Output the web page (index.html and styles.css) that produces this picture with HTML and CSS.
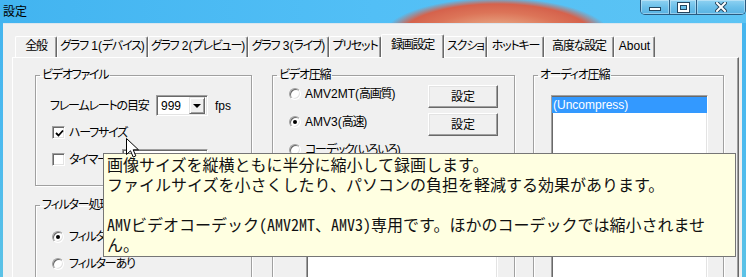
FILE: index.html
```html
<!DOCTYPE html>
<html lang="ja">
<head>
    <meta charset="UTF-8">
    <title>設定</title>
    <link rel="stylesheet" href="styles.css">
</head>
<body>
<div class="window">
    <div class="titlebar">
        <span class="title">設定</span>
        <div class="caption-buttons">
            <span class="cap-btn cap-min"><span class="glyph-min"></span></span>
            <span class="cap-btn cap-max"><span class="glyph-max"></span></span>
            <span class="cap-btn cap-close">
                <svg width="12" height="10" viewBox="0 0 12 10">
                    <path d="M2 1 L10 9 M10 1 L2 9" stroke="#24465f" stroke-width="4" stroke-linecap="square"/>
                    <path d="M2 1 L10 9 M10 1 L2 9" stroke="#fff" stroke-width="2" stroke-linecap="square"/>
                </svg>
            </span>
        </div>
    </div>

    <div class="client">
        <!-- tab strip -->
        <div class="tabs">
            <div class="tab tab-general">全般</div>
            <div class="tab tab-graph1">グラフ<span class="en">&nbsp;1(</span>デバイス<span class="en">)</span></div>
            <div class="tab tab-graph2">グラフ<span class="en">&nbsp;2(</span>プレビュー<span class="en">)</span></div>
            <div class="tab tab-graph3">グラフ<span class="en">&nbsp;3(</span>ライブ<span class="en">)</span></div>
            <div class="tab tab-preset">プリセット</div>
            <div class="tab tab-record selected">録画設定</div>
            <div class="tab tab-shot">スクショ</div>
            <div class="tab tab-hotkey">ホットキー</div>
            <div class="tab tab-advanced">高度な設定</div>
            <div class="tab tab-about"><span class="en">About</span></div>
        </div>

        <div class="tab-panel">
            <div class="column">
                <fieldset class="group group-file">
                    <legend>ビデオファイル</legend>
                    <div class="group-body">
                        <div class="row">
                            <span class="fps-label">フレームレートの目安</span>
                            <div class="combo">
                                <span class="combo-value en">999</span>
                                <span class="combo-btn"><span class="arrow"></span></span>
                            </div>
                            <span class="unit en">fps</span>
                        </div>
                        <div class="row check-row">
                            <span class="check">
                                <svg width="9" height="9" viewBox="0 0 9 9">
                                    <path d="M1 4 L3.5 6.5 L8 1.5" stroke="#000" stroke-width="1.8" fill="none"/>
                                </svg>
                            </span>
                            <span>ハーフサイズ</span>
                        </div>
                        <div class="row check-row">
                            <span class="check"></span>
                            <span class="timer-label">タイマー</span>
                            <div class="edit"></div>
                        </div>
                    </div>
                </fieldset>

                <fieldset class="group group-filter">
                    <legend>フィルター処理</legend>
                    <div class="group-body">
                        <div class="row radio-row"><span class="radio on"></span><span>フィルターなし</span></div>
                        <div class="row radio-row"><span class="radio"></span><span>フィルターあり</span></div>
                    </div>
                </fieldset>
            </div>

            <fieldset class="group group-video">
                <legend>ビデオ圧縮</legend>
                <div class="group-body">
                    <div class="codec-row">
                        <span class="radio-label"><span class="radio"></span><span><span class="en">AMV2MT(</span>高画質<span class="en">)</span></span></span>
                        <button class="btn">設定</button>
                    </div>
                    <div class="codec-row">
                        <span class="radio-label"><span class="radio on"></span><span><span class="en">AMV3(</span>高速<span class="en">)</span></span></span>
                        <button class="btn">設定</button>
                    </div>
                    <div class="codec-row">
                        <span class="radio-label"><span class="radio"></span><span>コーデック<span class="en">(</span>いろいろ<span class="en">)</span></span></span>
                    </div>
                    <div class="listbox codec-list"></div>
                </div>
            </fieldset>

            <fieldset class="group group-audio">
                <legend>オーディオ圧縮</legend>
                <div class="group-body">
                    <div class="listbox audio-list">
                        <div class="list-item selected en">(Uncompress)</div>
                    </div>
                </div>
            </fieldset>
        </div>
    </div>

    <!-- hover help -->
    <div class="tooltip">
        <div>画像サイズを縦横ともに半分に縮小して録画します。</div>
        <div>ファイルサイズを小さくしたり、パソコンの負担を軽減する効果があります。</div>
        <div>&nbsp;</div>
        <div><span class="hw">AMV</span>ビデオコーデック<span class="hw">(AMV2MT</span>、<span class="hw">AMV3)</span>専用です。ほかのコーデックでは縮小されませ</div>
        <div>ん。</div>
    </div>

    <svg class="cursor" width="14" height="21" viewBox="0 0 14 21">
        <path d="M0.5 0.5 L0.5 16.5 L4.5 12.8 L7.2 19 L9.8 17.9 L7.2 11.8 L12.5 11.8 Z" fill="#fff" stroke="#000" stroke-width="1" stroke-linejoin="round"/>
    </svg>
</div>
</body>
</html>
```

FILE: styles.css
```css
* {
    box-sizing: border-box;
}

body {
    margin: 0;
    width: 746px;
    height: 277px;
    overflow: hidden;
    font-family: "Liberation Sans", "Noto Sans CJK JP", sans-serif;
    font-size: 12px;
    line-height: 14px;
    letter-spacing: -1.2px;
    white-space: nowrap;
    color: #000;
    font-feature-settings: "palt";
}

/* latin runs keep their natural spacing */
.en {
    letter-spacing: 0;
}

.window {
    position: relative;
    height: 277px;
    display: flex;
    flex-direction: column;
    background: linear-gradient(180deg, #44b4ee 0%, #4cbaef 50%, #5bc2e6 100%);
}

/* title bar */
.titlebar {
    height: 23px;
    flex: none;
    display: flex;
    align-items: flex-start;
    padding: 0 0 0 3px;
    background:
        radial-gradient(ellipse 114px 38px at 497px 36px, #ecb692 0%, #e6a07e 30%, #dc7458 62%, #d5624c 84%, rgba(110, 196, 244, 0) 100%),
        linear-gradient(90deg, #42b4f0 0%, #52bff6 50%, #5cc4f4 100%);
}

.title {
    margin-top: 4px;
    font-size: 12px;
    line-height: 14px;
    letter-spacing: 0;
    font-family: "Noto Sans CJK JP", sans-serif;
}

.caption-buttons {
    margin-left: auto;
    display: flex;
    height: 15px;
    border: 1px solid #2a5a80;
    border-top: none;
    border-radius: 0 0 5px 5px;
    overflow: hidden;
}

.cap-btn {
    display: flex;
    align-items: center;
    justify-content: center;
    height: 14px;
    background: linear-gradient(180deg, #8fd2f2 0%, #6cc0ea 50%, #58b2e2 100%);
    box-shadow: inset 0 0 0 1px rgba(255, 255, 255, 0.35);
}

.cap-min {
    width: 29px;
    border-right: 1px solid #2a5a80;
}

.cap-max {
    width: 27px;
    border-right: 1px solid #2a5a80;
}

.cap-close {
    width: 48px;
}

.glyph-min {
    width: 12px;
    height: 4px;
    margin-top: 3px;
    background: #fff;
    border: 1px solid #24465f;
}

.glyph-max {
    width: 11px;
    height: 9px;
    border: 2px solid #fff;
    outline: 1px solid #24465f;
    box-shadow: inset 0 0 0 1px #24465f;
}

/* client area */
.client {
    flex: 1;
    margin: 0 4px 0 3px;
    background: #f0f0f0;
    border-top: 1px solid #dbe6ee;
    overflow: hidden;
}

.tabs {
    display: flex;
    align-items: flex-end;
    height: 23px;
    margin: 10px 0 0 12px;
}

.tab {
    height: 21px;
    flex: none;
    text-align: center;
    line-height: 19px;
    background: #f0f0f0;
    border-top: 1px solid #fff;
    border-left: 1px solid #fff;
    border-right: 1px solid #696969;
    box-shadow: inset -1px 0 0 #a0a0a0;
    border-radius: 2px 2px 0 0;
}

.tab.selected {
    height: 24px;
    margin-bottom: -1px;
    line-height: 20px;
    position: relative;
    z-index: 1;
}

.tab-general { width: 42px; }
.tab-graph1 { width: 91px; }
.tab-graph2 { width: 100px; }
.tab-graph3 { width: 81px; }
.tab-preset { width: 52px; }
.tab-record { width: 63px; }
.tab-shot { width: 43px; }
.tab-hotkey { width: 57px; }
.tab-advanced { width: 70px; }
.tab-about { width: 41px; }

.tab-panel {
    display: flex;
    align-items: flex-start;
    width: 727px;
    height: 240px;
    margin-left: 9px;
    padding: 10px 0 0 22px;
    border-top: 1px solid #fff;
    border-left: 1px solid #fff;
    border-right: 1px solid #696969;
    box-shadow: inset -1px 0 0 #a0a0a0;
}

/* group boxes */
.group {
    margin: 0;
    padding: 0;
    min-width: 0;
    border: 1px solid #a0a0a0;
    box-shadow: inset 1px 1px 0 #fff, 1px 1px 0 #fff;
}

.group legend {
    margin-left: 4px;
    padding: 0 2px;
    line-height: 14px;
}

.column {
    display: flex;
    flex-direction: column;
    gap: 12px;
    width: 217px;
}

.group-file {
    height: 118px;
}

.group-filter {
    height: 120px;
}

.group-video {
    width: 243px;
    height: 230px;
    margin-left: 20px;
}

.group-audio {
    width: 191px;
    height: 230px;
    margin-left: 18px;
}

.group-file .group-body {
    display: flex;
    flex-direction: column;
    gap: 6px;
    padding: 13px 0 0 14px;
}

.group-filter .group-body {
    display: flex;
    flex-direction: column;
    gap: 6px;
    padding: 14px 0 0 16px;
}

.group-video .group-body {
    display: flex;
    flex-direction: column;
    gap: 5px;
    padding: 3px 16px 0 16px;
}

.group-audio .group-body {
    padding: 13px 0 0 17px;
}

.row {
    display: flex;
    align-items: center;
    height: 21px;
}

.fps-label {
    width: 106px;
}

.unit {
    margin-left: 7px;
}

.check-row {
    gap: 4px;
    margin-left: 2px;
}

.radio-row {
    gap: 5px;
}

.timer-label {
    width: 49px;
}

/* classic 3D controls */
.check {
    width: 13px;
    height: 13px;
    display: flex;
    align-items: center;
    justify-content: center;
    background: #fff;
    border: 1px solid;
    border-color: #a0a0a0 #fff #fff #a0a0a0;
    box-shadow: inset 1px 1px 0 #696969, inset -1px -1px 0 #e3e3e3;
}

.check svg {
    margin: 1px 0 0 1px;
}

.radio {
    position: relative;
    width: 12px;
    height: 12px;
    flex: none;
    border-radius: 50%;
    background: #fff;
    border: 1px solid;
    border-color: #a0a0a0 #fff #fff #a0a0a0;
    box-shadow: inset 1px 1px 0 #696969, inset -1px -1px 0 #e3e3e3;
}

.radio.on::after {
    content: "";
    position: absolute;
    left: 3px;
    top: 3px;
    width: 4px;
    height: 4px;
    border-radius: 50%;
    background: #000;
}

.combo {
    width: 52px;
    height: 21px;
    display: flex;
    align-items: center;
    padding: 2px;
    background: #fff;
    border: 1px solid;
    border-color: #a0a0a0 #fff #fff #a0a0a0;
    box-shadow: inset 1px 1px 0 #696969, inset -1px -1px 0 #e3e3e3;
}

.combo-value {
    flex: 1;
    padding-left: 2px;
}

.combo-btn {
    width: 16px;
    height: 17px;
    display: flex;
    align-items: center;
    justify-content: center;
    background: #f0f0f0;
    border: 1px solid;
    border-color: #e3e3e3 #696969 #696969 #e3e3e3;
    box-shadow: inset 1px 1px 0 #fff, inset -1px -1px 0 #a0a0a0;
}

.arrow {
    width: 0;
    height: 0;
    border-left: 4px solid transparent;
    border-right: 4px solid transparent;
    border-top: 4px solid #000;
}

.edit {
    width: 86px;
    height: 21px;
    background: #fff;
    border: 1px solid;
    border-color: #a0a0a0 #fff #fff #a0a0a0;
    box-shadow: inset 1px 1px 0 #696969, inset -1px -1px 0 #e3e3e3;
}

.codec-row {
    display: flex;
    justify-content: space-between;
    height: 23px;
}

.radio-label {
    display: flex;
    align-items: center;
    gap: 4px;
    height: 17px;
}

.btn {
    width: 70px;
    height: 23px;
    padding: 0;
    font: inherit;
    letter-spacing: 0;
    color: #000;
    background: #f0f0f0;
    border: 1px solid;
    border-color: #fff #696969 #696969 #fff;
    box-shadow: inset -1px -1px 0 #a0a0a0, inset 1px 1px 0 #e3e3e3;
    border-radius: 0;
}

.listbox {
    background: #fff;
    border: 1px solid;
    border-color: #a0a0a0 #fff #fff #a0a0a0;
    box-shadow: inset 1px 1px 0 #696969, inset -1px -1px 0 #e3e3e3;
}

.codec-list {
    width: 192px;
    height: 120px;
    margin: 0 0 0 17px;
}

.audio-list {
    width: 157px;
    height: 200px;
    padding-top: 1px;
}

.list-item {
    height: 16px;
    line-height: 16px;
    padding-left: 1px;
}

.list-item.selected {
    background: #3399ff;
    color: #fff;
}

/* tooltip and pointer overlays */
.tooltip {
    position: absolute;
    left: 103px;
    top: 153px;
    width: 633px;
    height: 104px;
    padding: 0 3px;
    background: #ffffe1;
    border: 1px solid #767676;
    font-family: "Noto Sans CJK JP", sans-serif;
    font-feature-settings: normal;
    font-size: 16px;
    line-height: 20px;
    letter-spacing: 0;
    color: #111;
    overflow: hidden;
}

.tooltip .hw {
    font-feature-settings: "hwid";
}

.cursor {
    position: absolute;
    left: 126px;
    top: 138px;
}
```
